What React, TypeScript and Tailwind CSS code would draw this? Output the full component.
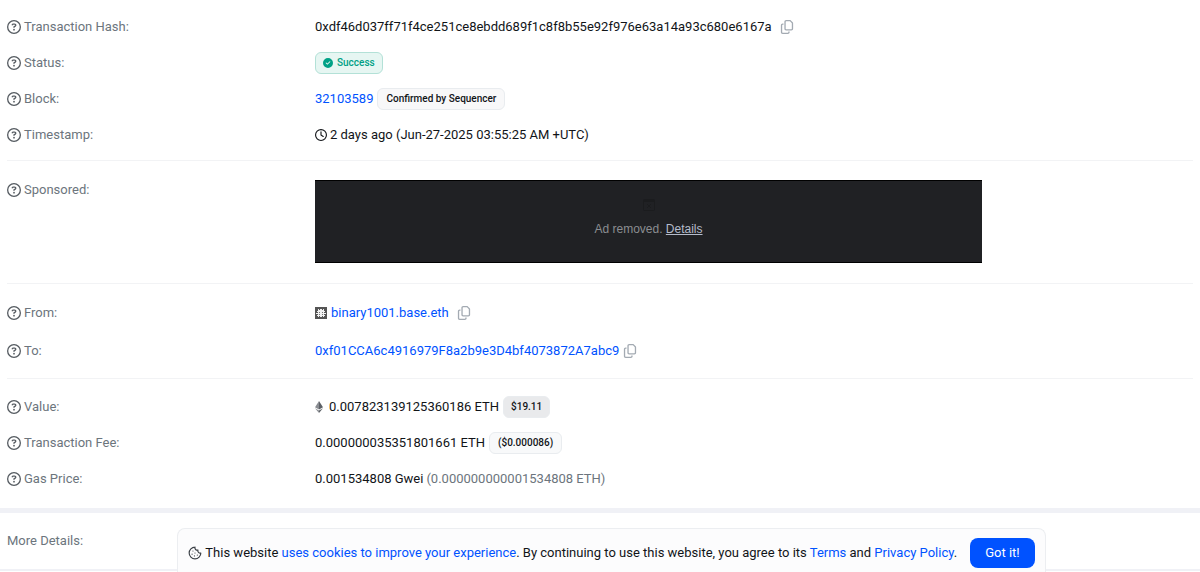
import React from 'react';
import { FaCircleCheck, FaRegCircleQuestion, FaRegClock, FaRegCopy } from 'react-icons/fa6';
import { LuCookie } from 'react-icons/lu';

type RowProps = {
  label: string;
  help?: boolean;
  rowClass?: string;
  children?: React.ReactNode;
};

const badgeBase = 'inline-flex items-center rounded-md border h-[22px] font-medium';

const linkClass = 'text-[#0052ff] hover:text-[#003ecb]';

const Row = ({ label, help = true, rowClass = 'min-h-9 items-center', children }: RowProps) => (
  <div className={`flex ${rowClass}`}>
    <dt className="w-[308px] shrink-0 flex items-center gap-[3px] text-[#6c757d]">
      {help && <FaRegCircleQuestion className="w-[14px] h-[14px] shrink-0 text-[#555b61]" />}
      {label}
    </dt>
    <dd className="flex-1 min-w-0 flex items-center">{children}</dd>
  </div>
);

const CopyButton = ({ label }: { label: string }) => (
  <button type="button" aria-label={label} className="shrink-0 text-[#a3aab2] hover:text-[#6c757d]">
    <FaRegCopy className="w-[14px] h-[14px]" />
  </button>
);

const EthIcon = () => (
  <svg viewBox="0 0 8 12" className="w-2 h-3 shrink-0" aria-hidden="true">
    <path d="M4 0 0 6.2 4 8.6z" fill="#8a8d92" />
    <path d="M4 0v8.6l4-2.4z" fill="#5c6066" />
    <path d="M0 7.2 4 12V9.6z" fill="#8a8d92" />
    <path d="M8 7.2 4 12V9.6z" fill="#5c6066" />
  </svg>
);

const AvatarIcon = () => (
  <svg viewBox="0 0 12 12" className="w-3 h-3 shrink-0" aria-hidden="true">
    <path d="M0 0h12v12H0z" fill="#555" />
    <path
      d="M3 2h1v1h1V2h2v1h1V2h1v2h1v1H9v1h2v1H9v1h1v1H9v1H8V9H7v1H5V9H4v1H3V9H2V8h1V7H1V6h2V5H2V4h1z"
      fill="#f2f2f2"
    />
    <path d="M4 5h1v1H4zM7 5h1v1H7zM4 7h1v1H4zM7 7h1v1H7z" fill="#777" />
  </svg>
);

const BlockedIcon = () => (
  <svg viewBox="0 0 12 12" className="w-3 h-3" fill="none" stroke="#1b1c1e" aria-hidden="true">
    <rect x="0.5" y="0.5" width="11" height="11" rx="1" />
    <path d="M0 2h12" strokeWidth="2" />
    <path d="m4 5 4 4M8 5 4 9" />
  </svg>
);

const App = () => (
  <div
    className="min-h-screen bg-white text-[13px] leading-5 text-[#111418]"
    style={{ fontFamily: "Roboto, 'Liberation Sans', sans-serif" }}
  >
    <main>
      <div className="px-[7px]">
        <dl className="pt-[9px] pb-[7px] border-b border-[#f2f3f5]">
          <Row label="Transaction Hash:">
            <span className="mr-2 break-all">
              0xdf46d037ff71f4ce251ce8ebdd689f1c8f8b55e92f976e63a14a93c680e6167a
            </span>
            <CopyButton label="Copy transaction hash" />
          </Row>
          <Row label="Status:">
            <span className={`${badgeBase} px-[7px] text-[10px] gap-1 border-[#b3e1d7] bg-[#e6f6f2] text-[#00a186]`}>
              <FaCircleCheck className="w-[10px] h-[10px]" />
              Success
            </span>
          </Row>
          <Row label="Block:">
            <a href="#block" className={linkClass}>32103589</a>
            <span className={`${badgeBase} px-2 text-[10px] ml-1 border-[#e9ecef] bg-[#f8f8f9]`}>Confirmed by Sequencer</span>
          </Row>
          <Row label="Timestamp:">
            <FaRegClock className="w-3 h-3 mr-[3px] shrink-0" />
            2 days ago (Jun-27-2025 03:55:25 AM +UTC)
          </Row>
        </dl>

        <dl className="pt-[19px] pb-5 border-b border-[#f2f3f5]">
          <Row label="Sponsored:" rowClass="items-start">
            <div
              className="w-full max-w-[667px] h-[83px] bg-[#202124] border-y border-black flex flex-col items-center justify-center gap-2 pb-[6px] text-xs leading-5 text-[#8b8d91]"
              style={{ fontFamily: "'Liberation Sans', Arial, sans-serif" }}
            >
              <BlockedIcon />
              <p>
                Ad removed.{' '}
                <a href="#details" className="text-[#b5bccb] underline">Details</a>
              </p>
            </div>
          </Row>
        </dl>

        <dl className="pt-[10px] pb-2 border-b border-[#f2f3f5]">
          <Row label="From:" rowClass="min-h-[38px] items-center">
            <AvatarIcon />
            <a href="#from" className={`${linkClass} ml-1 mr-2`}>binary1001.base.eth</a>
            <CopyButton label="Copy sender address" />
          </Row>
          <Row label="To:" rowClass="min-h-[38px] items-center">
            <a href="#to" className={`${linkClass} mr-1`}>0xf01CCA6c4916979F8a2b9e3D4bf4073872A7abc9</a>
            <CopyButton label="Copy recipient address" />
          </Row>
        </dl>

        <dl className="pt-[10px] pb-[11px]">
          <Row label="Value:">
            <EthIcon />
            <span className="ml-[6px]">0.007823139125360186 ETH</span>
            <span className={`${badgeBase} px-[7px] text-[10px] ml-1 border-[#e9ecef] bg-[#e9eaec]`}>$19.11</span>
          </Row>
          <Row label="Transaction Fee:">
            0.000000035351801661 ETH
            <span className={`${badgeBase} px-2 text-[10px] ml-1 border-[#e9ecef] bg-[#f8f9fa]`}>($0.000086)</span>
          </Row>
          <Row label="Gas Price:">
            0.001534808 Gwei
            <span className="ml-[3px] text-[#6c757d]">(0.000000000001534808 ETH)</span>
          </Row>
        </dl>
      </div>

      <dl className="px-[7px] border-t-[5px] border-b-2 border-[#f0f1f6]">
        <Row label="More Details:" help={false} rowClass="min-h-14 items-center" />
      </dl>
    </main>

    <div className="fixed inset-x-0 bottom-0 pl-[23px] flex justify-center">
      <div className="flex items-center gap-[13px] rounded-t-lg border border-b-0 border-[#eceef1] bg-[#fcfcfd] px-[10px] pt-[9px] pb-1">
        <p className="flex items-center gap-[3px]">
          <LuCookie className="w-[14px] h-[14px] shrink-0 text-[#3c4147]" />
          <span>
            This website <a href="#cookies" className={linkClass}>uses cookies to improve your experience</a>. By
            continuing to use this website, you agree to its <a href="#terms" className={linkClass}>Terms</a> and{' '}
            <a href="#privacy" className={linkClass}>Privacy Policy</a>.
          </span>
        </p>
        <button type="button" className="h-[30px] px-[15px] shrink-0 rounded-lg bg-[#0052ff] text-white hover:bg-[#003ecb]">
          Got it!
        </button>
      </div>
    </div>
  </div>
);

export default App;
